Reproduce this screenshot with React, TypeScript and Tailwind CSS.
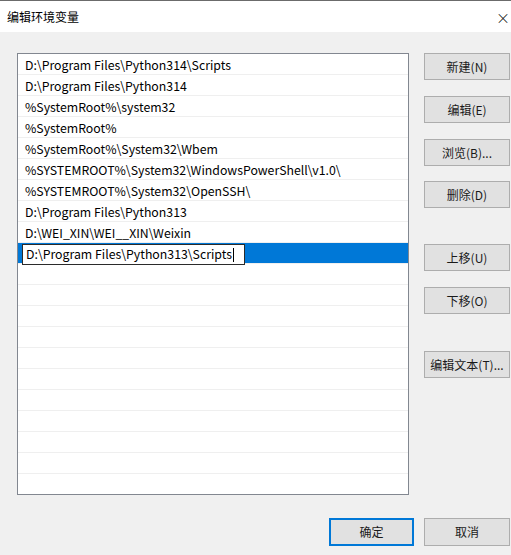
const paths = [
  "D:\\Program Files\\Python314\\Scripts",
  "D:\\Program Files\\Python314",
  "%SystemRoot%\\system32",
  "%SystemRoot%",
  "%SystemRoot%\\System32\\Wbem",
  "%SYSTEMROOT%\\System32\\WindowsPowerShell\\v1.0\\",
  "%SYSTEMROOT%\\System32\\OpenSSH\\",
  "D:\\Program Files\\Python313",
  "D:\\WEI_XIN\\WEI__XIN\\Weixin",
];

const editing = "D:\\Program Files\\Python313\\Scripts";
const emptyRows = 11;

function SideButton({ label, className = "" }: { label: string; className?: string }) {
  return (
    <button
      className={`w-[86px] h-[27px] bg-[#e1e1e1] border border-[#adadad] text-[12px] text-[#1a1a1a] flex items-center justify-center ${className}`}
    >
      {label}
    </button>
  );
}

export default function App() {
  return (
    <div
      className="w-[511px] h-[555px] bg-[#f0f0f0] text-black overflow-hidden"
      style={{ fontFamily: '"Noto Sans CJK SC", "Noto Sans", sans-serif' }}
    >
      {/* title bar */}
      <div className="h-[32px] bg-white border-t border-[#6b6b6b] flex items-center justify-between pl-[7px] pr-[1px]">
        <span className="text-[12px] text-black">编辑环境变量</span>
        <span className="text-[14px] leading-none text-black font-light">×</span>
      </div>

      <div className="flex pl-[17px] pt-[21px]">
        {/* path list */}
        <div className="w-[392px] h-[442px] bg-white border border-[#828790] overflow-hidden">
          {paths.map((p) => (
            <div
              key={p}
              className="h-[21px] border-b border-[#efefef] pl-[7px] pt-[2px] flex items-center text-[12.3px] text-black whitespace-nowrap"
            >
              {p}
            </div>
          ))}
          <div className="h-[21px] bg-[#0078d7] flex items-center border-b border-[#efefef]">
            <div className="ml-[4px] mt-[2px] w-[223px] h-[21px] bg-white border border-[#2b2b2b] flex items-center pl-[3px] pt-[1px] text-[12.3px] text-black whitespace-nowrap">
              <span>{editing}</span>
              <span className="w-px h-[14px] bg-black ml-px" />
            </div>
          </div>
          {Array.from({ length: emptyRows }).map((_, i) => (
            <div key={i} className="h-[21px] border-b border-[#efefef]" />
          ))}
        </div>

        {/* action buttons */}
        <div className="ml-[15px] flex flex-col">
          <SideButton label="新建(N)" />
          <SideButton label="编辑(E)" className="mt-[16px]" />
          <SideButton label="浏览(B)..." className="mt-[16px]" />
          <SideButton label="删除(D)" className="mt-[15px]" />
          <SideButton label="上移(U)" className="mt-[36px]" />
          <SideButton label="下移(O)" className="mt-[16px]" />
          <SideButton label="编辑文本(T)..." className="mt-[37px]" />
        </div>
      </div>

      {/* dialog buttons */}
      <div className="flex justify-end gap-[10px] pr-[1px] mt-[23px]">
        <button className="w-[85px] h-[28px] bg-[#e1e1e1] border-2 border-[#0078d7] text-[12px] text-[#1a1a1a] flex items-center justify-center">
          确定
        </button>
        <button className="w-[86px] h-[28px] bg-[#e1e1e1] border border-[#adadad] text-[12px] text-[#1a1a1a] flex items-center justify-center">
          取消
        </button>
      </div>
    </div>
  );
}
